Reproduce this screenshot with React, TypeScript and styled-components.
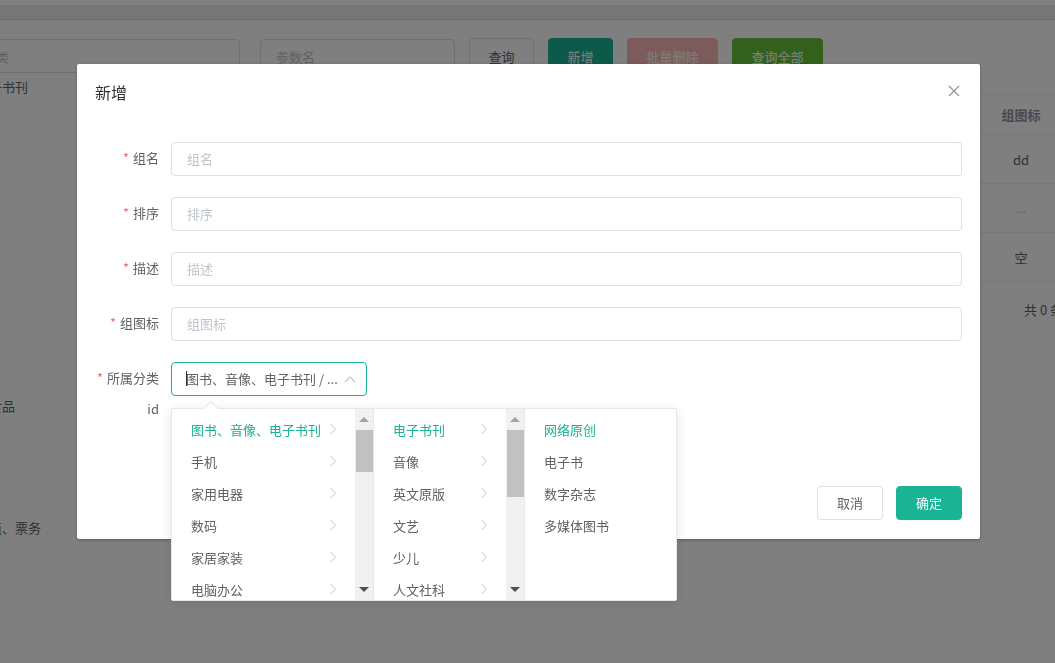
import React from 'react';
import styled, { createGlobalStyle } from 'styled-components';

const GlobalStyle = createGlobalStyle`
  html, body {
    margin: 0;
    padding: 0;
    font-family: "Noto Sans CJK SC", "Noto Sans", sans-serif;
    font-size: 13px;
    color: #606266;
  }
  * { box-sizing: border-box; }
`;

const TEAL = '#1ab394';

const treeItems = [
  '图书、音像、电子书刊', '手机', '家用电器', '数码', '家居家装', '电脑办公', '厨具',
  '个护化妆', '服饰内衣', '钟表', '鞋靴', '母婴', '礼品箱包', '食品饮料、保健食品',
  '珠宝', '汽车用品', '运动健康', '玩具乐器', '彩票、旅行、充值、票务',
];

const tableRows = ['dd', '...', '空'];

const formFields = ['组名', '排序', '描述', '组图标'];

const level1 = ['图书、音像、电子书刊', '手机', '家用电器', '数码', '家居家装', '电脑办公', '厨具'];
const level2 = ['电子书刊', '音像', '英文原版', '文艺', '少儿', '人文社科', '经管励志'];
const level3 = ['网络原创', '电子书', '数字杂志', '多媒体图书'];

export default function App() {
  return (
    <>
      <GlobalStyle />
      <Page>
        <TopStrip />
        <TabBar />
        <Toolbar>
          <SearchInput $width={273} $offset={-33} placeholder="分类" />
          <SearchInput $width={195} placeholder="参数名" />
          <ToolButton $variant="plain">查询</ToolButton>
          <ToolButton $variant="primary">新增</ToolButton>
          <ToolButton $variant="danger" $wide>批量删除</ToolButton>
          <ToolButton $variant="success" $wide>查询全部</ToolButton>
        </Toolbar>
        <Body>
          <Tree>
            {treeItems.map((t) => (
              <TreeRow key={t}>{t}</TreeRow>
            ))}
          </Tree>
          <Table>
            <HeadRow>
              <Cell />
              <Cell $head>组图标</Cell>
              <Cell $head>操作</Cell>
            </HeadRow>
            {tableRows.map((r, i) => (
              <DataRow key={i}>
                <Cell />
                <Cell $muted={r === '...'}>{r}</Cell>
                <Cell>编辑</Cell>
              </DataRow>
            ))}
            <Pager>共 0 条</Pager>
          </Table>
        </Body>
      </Page>

      <Overlay>
        <Modal>
          <ModalHeader>
            <Title>新增</Title>
            <CloseButton aria-label="关闭">
              <svg width="12" height="12" viewBox="0 0 12 12">
                <path d="M1 1 L11 11 M11 1 L1 11" stroke="#909399" strokeWidth="1.2" fill="none" />
              </svg>
            </CloseButton>
          </ModalHeader>
          <ModalBody>
            {formFields.map((f) => (
              <FormItem key={f}>
                <Label $required>{f}</Label>
                <TextInput placeholder={f} />
              </FormItem>
            ))}
            <FormItem $tight>
              <Label $required>所属分类</Label>
              <SelectWrap>
                <SelectBox>
                  <Caret />
                  <SelectText>图书、音像、电子书刊 / ...</SelectText>
                  <SelectArrow>
                    <svg width="12" height="8" viewBox="0 0 12 8">
                      <polyline points="1,7 6,2 11,7" stroke="#c0c4cc" strokeWidth="1.2" fill="none" />
                    </svg>
                  </SelectArrow>
                </SelectBox>
                <Dropdown>
                  <DropArrow />
                  <CascaderPanel $width={202}>
                    <OptionList>
                      {level1.map((o, i) => (
                        <OptionItem key={o} $active={i === 0}>
                          <span>{o}</span>
                          <Chevron />
                        </OptionItem>
                      ))}
                    </OptionList>
                    <FakeScroll $thumbTop={21} $thumbHeight={42} />
                  </CascaderPanel>
                  <CascaderPanel $width={151}>
                    <OptionList>
                      {level2.map((o, i) => (
                        <OptionItem key={o} $active={i === 0}>
                          <span>{o}</span>
                          <Chevron />
                        </OptionItem>
                      ))}
                    </OptionList>
                    <FakeScroll $thumbTop={21} $thumbHeight={67} />
                  </CascaderPanel>
                  <CascaderPanel $last>
                    <OptionList>
                      {level3.map((o, i) => (
                        <OptionItem key={o} $active={i === 0}>
                          <span>{o}</span>
                        </OptionItem>
                      ))}
                    </OptionList>
                  </CascaderPanel>
                </Dropdown>
              </SelectWrap>
            </FormItem>
            <FormItem>
              <Label $small>id</Label>
            </FormItem>
          </ModalBody>
          <ModalFooter>
            <FooterButton>取消</FooterButton>
            <FooterButton $primary>确定</FooterButton>
          </ModalFooter>
        </Modal>
      </Overlay>
    </>
  );
}

function Chevron() {
  return (
    <svg width="8" height="12" viewBox="0 0 8 12">
      <polyline points="1.5,1 6.5,6 1.5,11" stroke="#c0c4cc" strokeWidth="1" fill="none" />
    </svg>
  );
}

function FakeScroll({ $thumbTop, $thumbHeight }: { $thumbTop: number; $thumbHeight: number }) {
  return (
    <ScrollTrack>
      <ScrollArrow $up />
      <ScrollThumb style={{ top: $thumbTop, height: $thumbHeight }} />
      <ScrollArrow />
    </ScrollTrack>
  );
}

/* ---------- background page ---------- */

const Page = styled.div`
  width: 100%;
  height: 100vh;
  background: #fff;
  overflow: hidden;
`;

const TopStrip = styled.div`
  height: 5px;
  background: #fff;
`;

const TabBar = styled.div`
  height: 15px;
  background: #ededed;
  border-bottom: 1px solid #d9d9d9;
`;

const Toolbar = styled.div`
  display: flex;
  align-items: center;
  gap: 14px;
  padding-top: 19px;
  height: 53px;
`;

const SearchInput = styled.input<{ $width: number; $offset?: number }>`
  width: ${(p) => p.$width}px;
  margin-left: ${(p) => p.$offset ?? 0}px;
  margin-right: ${(p) => (p.$offset ? 6 : 0)}px;
  height: 34px;
  flex-shrink: 0;
  border: 1px solid #dcdfe6;
  border-radius: 4px;
  padding: 0 15px;
  font: inherit;
  outline: none;
  &::placeholder { color: #c0c4cc; }
`;

const buttonColors: Record<string, { bg: string; fg: string; border: string }> = {
  plain: { bg: '#fff', fg: '#606266', border: '#dcdfe6' },
  primary: { bg: TEAL, fg: '#fff', border: TEAL },
  danger: { bg: '#fab6b6', fg: '#fff', border: '#fab6b6' },
  success: { bg: '#67c23a', fg: '#fff', border: '#67c23a' },
};

const ToolButton = styled.button<{ $variant: string; $wide?: boolean }>`
  width: ${(p) => (p.$wide ? 91 : 65)}px;
  height: 36px;
  padding: 0;
  flex-shrink: 0;
  border-radius: 4px;
  font: inherit;
  font-size: 13px;
  background: ${(p) => buttonColors[p.$variant].bg};
  color: ${(p) => buttonColors[p.$variant].fg};
  border: 1px solid ${(p) => buttonColors[p.$variant].border};
`;

const Body = styled.div`
  display: flex;
  margin-top: 2px;
`;

const Tree = styled.div`
  width: 1002px;
  margin-left: -102px;
  flex-shrink: 0;
`;

const TreeRow = styled.div`
  height: 24.5px;
  line-height: 24px;
  color: #606266;
  white-space: nowrap;
`;

const Table = styled.div`
  margin-top: 19px;
  width: 400px;
  flex-shrink: 0;
  border-top: 1px solid #ebeef5;
`;

const HeadRow = styled.div`
  display: grid;
  grid-template-columns: 87px 68px 120px;
  height: 40px;
  border-bottom: 1px solid #ebeef5;
  align-items: center;
`;

const DataRow = styled(HeadRow)`
  height: 49px;
`;

const Cell = styled.div<{ $head?: boolean; $muted?: boolean }>`
  text-align: center;
  font-weight: ${(p) => (p.$head ? 700 : 400)};
  color: ${(p) => (p.$head ? '#909399' : p.$muted ? '#b0b3b8' : '#606266')};
  font-size: ${(p) => (p.$muted ? '11px' : '13px')};
  white-space: nowrap;
`;

const Pager = styled.div`
  margin-top: 19px;
  padding-left: 124px;
  line-height: 18px;
  color: #606266;
`;

/* ---------- modal ---------- */

const Overlay = styled.div`
  position: fixed;
  inset: 0;
  background: rgba(0, 0, 0, 0.5);
  display: flex;
  align-items: flex-start;
  padding: 64px 0 0 77px;
`;

const Modal = styled.div`
  width: 903px;
  height: 475px;
  background: #fff;
  border-radius: 2px;
  box-shadow: 0 1px 3px rgba(0, 0, 0, 0.3);
  display: flex;
  flex-direction: column;
`;

const ModalHeader = styled.div`
  display: flex;
  justify-content: space-between;
  align-items: center;
  padding: 19px 20px 21px 18px;
`;

const Title = styled.span`
  font-size: 16px;
  line-height: 18px;
  color: #303133;
`;

const CloseButton = styled.button`
  border: none;
  background: none;
  padding: 0;
  margin-top: -2px;
  display: flex;
  width: 12px;
  height: 12px;
`;

const ModalBody = styled.div`
  padding: 20px 18px 0 20px;
`;

const FormItem = styled.div<{ $tight?: boolean }>`
  display: flex;
  margin-bottom: ${(p) => (p.$tight ? 0 : 21)}px;
`;

const Label = styled.label<{ $required?: boolean; $small?: boolean }>`
  width: 74px;
  flex-shrink: 0;
  text-align: right;
  padding-right: 12px;
  line-height: ${(p) => (p.$small ? 26 : 32)}px;
  color: #606266;
  white-space: nowrap;
  &::before {
    content: ${(p) => (p.$required ? "'*'" : 'none')};
    color: #f56c6c;
    margin-right: 4px;
  }
`;

const TextInput = styled.input`
  flex: 1;
  height: 34px;
  border: 1px solid #dcdfe6;
  border-radius: 4px;
  padding: 0 15px 2px;
  font: inherit;
  color: #606266;
  outline: none;
  &::placeholder { color: #c0c4cc; }
`;

const SelectWrap = styled.div`
  position: relative;
  width: 196px;
`;

const SelectBox = styled.div`
  height: 34px;
  border: 1px solid ${TEAL};
  border-radius: 4px;
  padding: 0 0 2px 14px;
  display: flex;
  align-items: center;
  position: relative;
`;

const Caret = styled.span`
  width: 1px;
  height: 15px;
  background: #303133;
  flex-shrink: 0;
  margin-right: -1px;
`;

const SelectText = styled.span`
  white-space: nowrap;
  color: #606266;
`;

const SelectArrow = styled.span`
  position: absolute;
  right: 10px;
  top: 12px;
  display: flex;
`;

const Dropdown = styled.div`
  position: absolute;
  top: calc(100% + 12px);
  left: 0;
  z-index: 10;
  width: 506px;
  height: 193px;
  background: #fff;
  border: 1px solid #e4e7ed;
  border-radius: 2px;
  box-shadow: 0 2px 12px rgba(0, 0, 0, 0.1);
  display: flex;
`;

const DropArrow = styled.span`
  position: absolute;
  top: -6px;
  left: 34px;
  width: 10px;
  height: 10px;
  background: #fff;
  border-top: 1px solid #e4e7ed;
  border-left: 1px solid #e4e7ed;
  transform: rotate(45deg);
`;

const CascaderPanel = styled.div<{ $width?: number; $last?: boolean }>`
  display: flex;
  height: 100%;
  overflow: hidden;
  flex: ${(p) => (p.$last ? '1' : `0 0 ${p.$width}px`)};
  border-right: ${(p) => (p.$last ? 'none' : '1px solid #e4e7ed')};
`;

const OptionList = styled.ul`
  list-style: none;
  margin: 0;
  padding: 4px 0;
  flex: 1;
  min-width: 0;
`;

const OptionItem = styled.li<{ $active?: boolean }>`
  height: 32px;
  padding: 0 18px 0 19px;
  display: flex;
  align-items: center;
  justify-content: space-between;
  white-space: nowrap;
  color: ${(p) => (p.$active ? TEAL : '#606266')};
  svg { flex-shrink: 0; }
`;

const ScrollTrack = styled.div`
  position: relative;
  width: 18px;
  flex-shrink: 0;
  background: #f1f1f1;
`;

const ScrollThumb = styled.div`
  position: absolute;
  left: 1px;
  right: 0;
  background: #c1c1c1;
`;

const ScrollArrow = styled.span<{ $up?: boolean }>`
  position: absolute;
  left: 4px;
  width: 0;
  height: 0;
  border-left: 5px solid transparent;
  border-right: 5px solid transparent;
  ${(p) =>
    p.$up
      ? 'top: 8px; border-bottom: 5px solid #a3a3a3;'
      : 'bottom: 8px; border-top: 5px solid #505050;'}
`;

const ModalFooter = styled.div`
  margin-top: auto;
  display: flex;
  justify-content: flex-end;
  gap: 13px;
  padding: 0 18px 19px 0;
`;

const FooterButton = styled.button<{ $primary?: boolean }>`
  width: 66px;
  height: 34px;
  padding: 0 0 2px;
  border-radius: 4px;
  font: inherit;
  font-size: 13px;
  background: ${(p) => (p.$primary ? TEAL : '#fff')};
  color: ${(p) => (p.$primary ? '#fff' : '#606266')};
  border: 1px solid ${(p) => (p.$primary ? TEAL : '#dcdfe6')};
`;
